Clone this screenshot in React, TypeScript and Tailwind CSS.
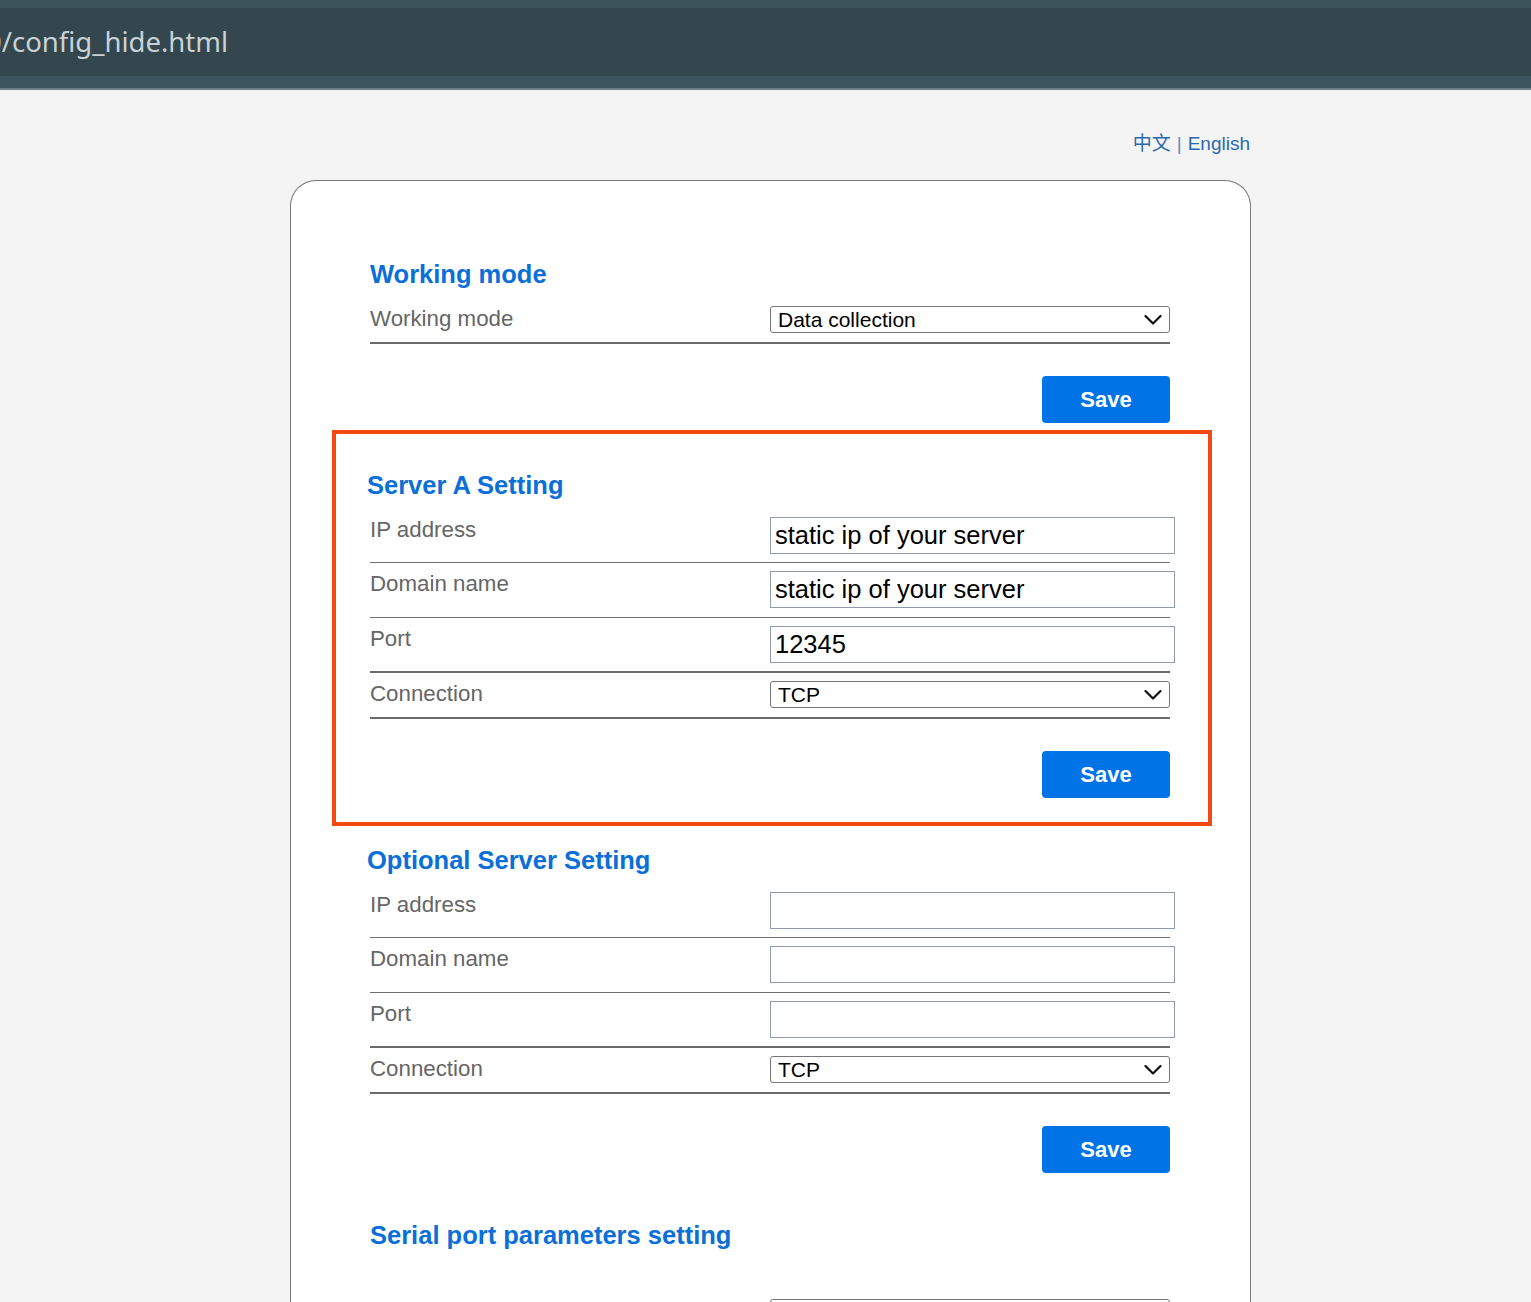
import React from "react";

const Chevron = () => (
  <svg
    className="pointer-events-none absolute right-[7px] top-1/2 -translate-y-1/2"
    width="18"
    height="11"
    viewBox="0 0 18 11"
    fill="none"
  >
    <path d="M1.5 1.5 L9 9 L16.5 1.5" stroke="#111" strokeWidth="2.2" strokeLinecap="round" strokeLinejoin="round" />
  </svg>
);

function SelectBox({ value }: { value: string }) {
  return (
    <div className="relative shrink-0 w-[400px] h-[27px] border border-[#767676] rounded-[3px] bg-white flex items-center pl-[7px] text-[21px] text-black leading-none">
      <span>{value}</span>
      <Chevron />
    </div>
  );
}

function InputBox({ value }: { value?: string }) {
  return (
    <div className="shrink-0 w-[405px] h-[37px] border border-[#8f9cad] bg-white flex items-center pl-[4px] text-[25.5px] text-black leading-none">
      <span>{value ?? ""}</span>
    </div>
  );
}

function Row({
  label,
  kind,
  value,
  thick,
  tight,
}: {
  label: string;
  kind: "input" | "select";
  value?: string;
  thick?: boolean;
  tight?: boolean;
}) {
  return (
    <div
      className={
        "flex items-start pt-2 " +
        (tight ? "pb-2 " : "pb-[9px] ") +
        (thick ? "border-b-2 border-[#6a6a6a]" : "border-b border-[#707070]")
      }
    >
      <div className="w-[400px] shrink-0 text-[22.3px] leading-[24px] text-[#666666] pt-[1px]">{label}</div>
      {kind === "select" ? <SelectBox value={value ?? ""} /> : <InputBox value={value} />}
    </div>
  );
}

function Header({ children, shift }: { children: React.ReactNode; shift?: boolean }) {
  return (
    <h2
      className={
        "text-[25.5px] leading-[30px] font-bold text-[#0a6fd8] mb-[9px] " + (shift ? "-ml-[3px]" : "")
      }
    >
      {children}
    </h2>
  );
}

function SaveRow() {
  return (
    <div className="flex justify-end pt-8">
      <button className="w-[128px] h-[47px] rounded-[4px] bg-[#0073e6] text-white font-bold text-[22px] leading-none">
        Save
      </button>
    </div>
  );
}

export default function App() {
  return (
    <div
      className="min-h-[1302px] bg-[#f4f4f4] overflow-hidden"
      style={{ fontFamily: '"Liberation Sans", Arial, "Noto Sans CJK SC", sans-serif' }}
    >
      {/* top browser bar */}
      <div className="h-[90px] flex flex-col">
        <div className="h-[8px] bg-[#3d535c]" />
        <div className="h-[68px] bg-[#34464e] flex items-center overflow-hidden">
          <span
            className="ml-[-14px] text-[27.5px] text-[#c9d2d6] leading-none whitespace-nowrap"
            style={{ fontFamily: '"Noto Sans", "Open Sans", sans-serif' }}
          >
            0/config_hide.html
          </span>
        </div>
        <div className="h-[12px] bg-[#3c545e]" />
        <div className="h-[2px] bg-[#6f7f86]" />
      </div>

      <div className="ml-[290px] w-[961px]">
        <div className="pt-[41px] h-[90px] text-right pr-[1px] text-[19px] leading-[22px] text-[#2a69b0]">
          <span style={{ fontFamily: '"Noto Sans CJK SC", sans-serif' }}>中文</span>
          <span className="mx-[6px] text-[#5f8cc0]">|</span>
          <span>English</span>
        </div>

        <div className="bg-white border border-[#777777] border-b-0 rounded-t-[26px] pt-[78px] pl-[79px] pr-[80px] pb-[200px] min-h-[1140px]">
          <div className="w-[800px]">
            {/* Working mode */}
            <section>
              <Header>Working mode</Header>
              <Row label="Working mode" kind="select" value="Data collection" thick />
              <SaveRow />
            </section>

            {/* Server A */}
            <section className="mt-[7px] -ml-[38px] -mr-[42px] border-4 border-[#f24a12] pt-[36px] pl-[34px] pr-[38px] pb-[24px]">
              <Header shift>Server A Setting</Header>
              <Row label="IP address" kind="input" value="static ip of your server" tight />
              <Row label="Domain name" kind="input" value="static ip of your server" />
              <Row label="Port" kind="input" value="12345" thick tight />
              <Row label="Connection" kind="select" value="TCP" thick />
              <SaveRow />
            </section>

            {/* Optional server */}
            <section className="mt-[19px]">
              <Header shift>Optional Server Setting</Header>
              <Row label="IP address" kind="input" tight />
              <Row label="Domain name" kind="input" />
              <Row label="Port" kind="input" thick tight />
              <Row label="Connection" kind="select" value="TCP" thick />
              <SaveRow />
            </section>

            {/* Serial port */}
            <section className="mt-[47px]">
              <Header>Serial port parameters setting</Header>
              <div className="h-[32px]" />
              <Row label="Baud rate" kind="select" value="9600" thick />
              <Row label="Data bits" kind="select" value="8" thick />
            </section>
          </div>
        </div>
      </div>
    </div>
  );
}
